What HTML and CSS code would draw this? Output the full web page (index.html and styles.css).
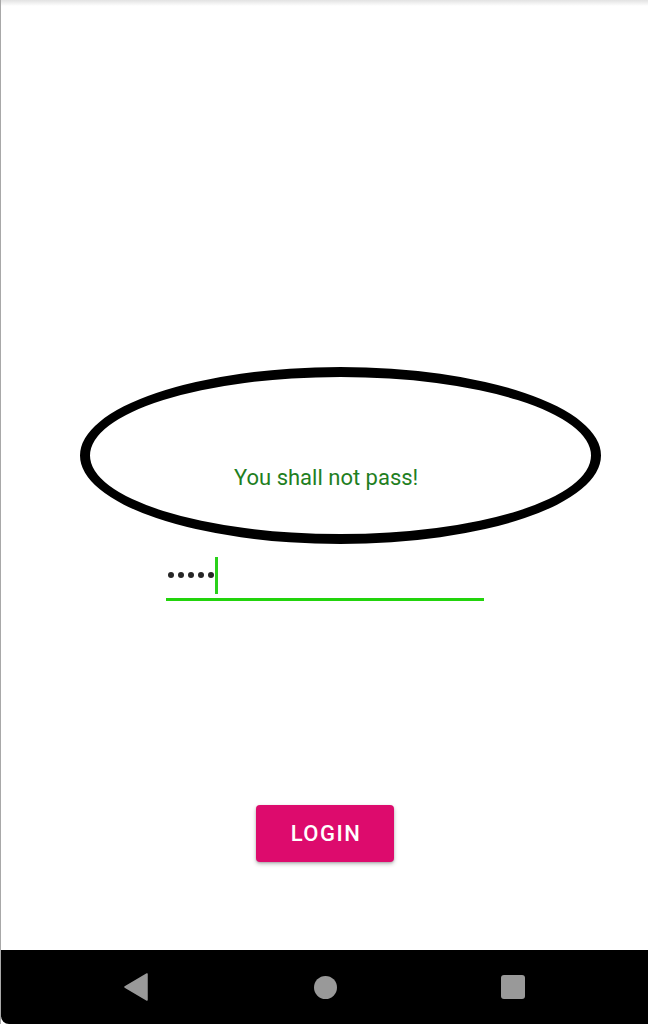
FILE: index.html
```html
<!DOCTYPE html>
<html>
<head>
<meta charset="utf-8">
<link rel="stylesheet" href="styles.css">
</head>
<body>
<div class="screen">
  <main class="content">
    <div class="topshade"></div>
    <div class="ellipse">
      <span class="message">You shall not pass!</span>
    </div>
    <div class="field">
      <div class="value">
        <span class="dot"></span><span class="dot"></span><span class="dot"></span><span class="dot"></span><span class="dot"></span>
        <span class="caret"></span>
      </div>
      <div class="underline"></div>
    </div>
    <div class="actions">
      <button class="login">LOGIN</button>
    </div>
  </main>
  <nav class="navbar">
    <svg class="nav-icon" width="24" height="28" viewBox="0 0 24 28"><path d="M23 1 L23 27 L1 14 Z" fill="#999" stroke="#999" stroke-width="1.5" stroke-linejoin="round"/></svg>
    <span class="nav-home"></span>
    <span class="nav-recent"></span>
  </nav>
</div>
</body>
</html>
```

FILE: styles.css
```css
* { box-sizing: border-box; }
html, body { margin: 0; padding: 0; background: #fff; }
body { font-family: Roboto, "Noto Sans", Arial, sans-serif; }
.screen {
  width: 648px;
  height: 1024px;
  display: flex;
  flex-direction: column;
  border-left: 1px solid #a8a8a8;
  overflow: hidden;
}
.content {
  height: 950px;
  display: flex;
  flex-direction: column;
  background: #fff;
}
.topshade {
  height: 6px;
  background: linear-gradient(#e2e2e2, #ffffff);
}
.ellipse {
  margin-top: 361px;
  margin-left: 79px;
  width: 521px;
  height: 177px;
  border: 10px solid #000;
  border-radius: 50%;
  display: flex;
  align-items: flex-start;
}
.message {
  margin-top: 88px;
  margin-left: 144px;
  font-size: 22px;
  line-height: 26px;
  color: #1f7f1f;
}
.field {
  margin-left: 165px;
  width: 318px;
  margin-top: 8px;
}
.value {
  height: 46px;
  display: flex;
  align-items: center;
  padding-left: 2px;
  gap: 4px;
}
.dot {
  width: 6px;
  height: 6px;
  border-radius: 50%;
  background: #262626;
}
.caret {
  width: 3px;
  height: 37px;
  background: #2ad11b;
  margin-left: -3px;
}
.underline {
  height: 3px;
  background: #22d40c;
}
.actions {
  display: flex;
  margin-top: 204px;
  margin-left: 255px;
}
.login {
  width: 138px;
  height: 57px;
  border: none;
  border-radius: 4px;
  background: #dd0b6d;
  color: #fff;
  font-family: Roboto, sans-serif;
  font-weight: 500;
  font-size: 22px;
  letter-spacing: 1.5px;
  padding: 0 0 0 2px;
  box-shadow: 0 2px 4px rgba(0,0,0,0.25), 0 1px 2px rgba(0,0,0,0.15);
}
.navbar {
  height: 74px;
  background: #000;
  border-bottom-left-radius: 8px;
  display: flex;
  align-items: center;
  padding-left: 123px;
}
.nav-icon { display: block; }
.nav-home {
  width: 23px;
  height: 23px;
  border-radius: 50%;
  background: #999;
  margin-left: 166px;
}
.nav-recent {
  width: 24px;
  height: 24px;
  border-radius: 3px;
  background: #999;
  margin-left: 164px;
}
```
